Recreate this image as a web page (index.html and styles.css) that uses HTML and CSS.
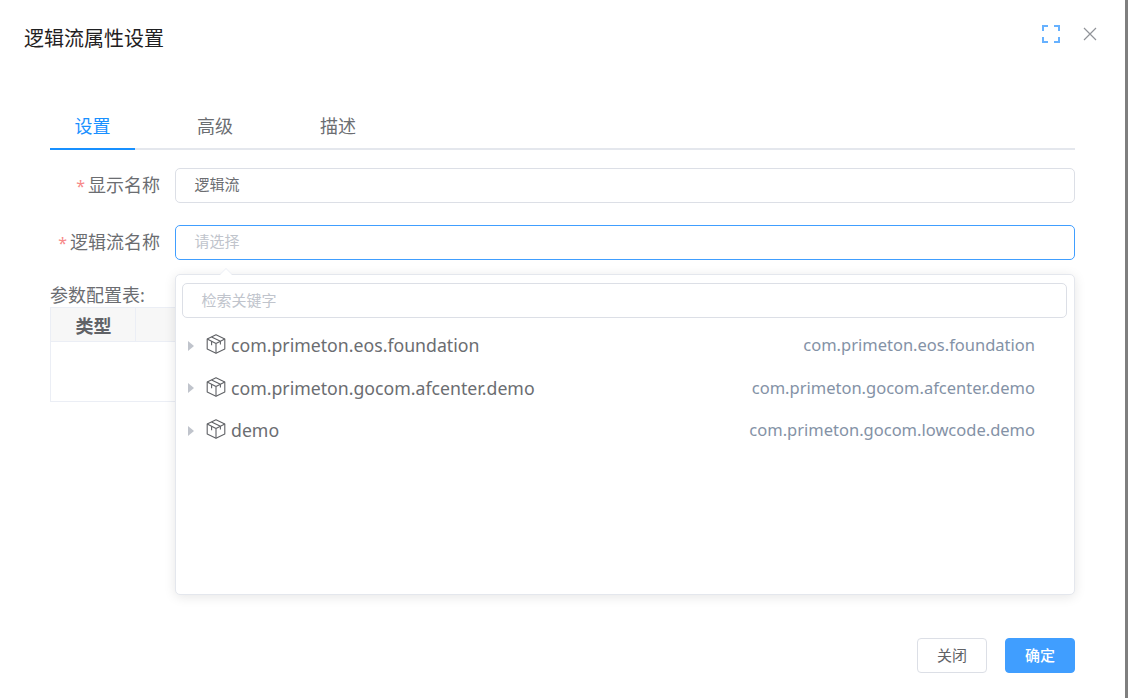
FILE: index.html
```html
<!DOCTYPE html>
<html lang="zh">
<head>
<meta charset="utf-8">
<title>逻辑流属性设置</title>
<link rel="stylesheet" href="styles.css">
</head>
<body>
<div class="dialog">
  <header class="head">
    <h1 class="title">逻辑流属性设置</h1>
    <div class="head-actions">
      <svg class="ico-full" width="18" height="18" viewBox="0 0 18 18" fill="none" stroke="#66b1ff" stroke-width="2"><path d="M1 6V1h5M12 1h5v5M17 12v5h-5M6 17H1v-5"/></svg>
      <svg class="ico-close" width="14" height="14" viewBox="0 0 14 14" fill="none" stroke="#909399" stroke-width="1.2"><path d="M1 1l12 12M13 1L1 13"/></svg>
    </div>
  </header>
  <main class="body">
    <nav class="tabs">
      <span class="tab active">设置</span>
      <span class="tab">高级</span>
      <span class="tab">描述</span>
    </nav>
    <div class="row">
      <label class="lbl"><i>*</i>显示名称</label>
      <div class="input">逻辑流</div>
    </div>
    <div class="row row2">
      <label class="lbl"><i>*</i>逻辑流名称</label>
      <div class="input focus">请选择</div>
    </div>
    <div class="param">参数配置表:</div>
    <div class="table">
      <div class="thead"><span class="th">类型</span></div>
      <div class="tbody"></div>
    </div>
  </main>
  <footer class="foot">
    <button class="btn">关闭</button>
    <button class="btn primary">确定</button>
  </footer>
  <div class="pop">
    <span class="arrow"></span>
    <div class="search">检索关键字</div>
    <ul class="tree">
      <li class="node"><span class="caret"></span>
        <svg class="pkg" width="20" height="20" viewBox="0 0 20 20" fill="none" stroke="#606266" stroke-width="1.1" stroke-linejoin="round"><path d="M10 .8l8.800 4.200v10L10 19.200 1.200 15V5z"/><path d="M1.200 5L10 9.400 18.800 5M10 9.400v9.800M5.600 2.900l8.800 4.300v3.300M5.600 7.200v4"/></svg>
        <span class="name">com.primeton.eos.foundation</span><span class="pk">com.primeton.eos.foundation</span></li>
      <li class="node"><span class="caret"></span>
        <svg class="pkg" width="20" height="20" viewBox="0 0 20 20" fill="none" stroke="#606266" stroke-width="1.1" stroke-linejoin="round"><path d="M10 .8l8.800 4.200v10L10 19.200 1.200 15V5z"/><path d="M1.200 5L10 9.400 18.800 5M10 9.400v9.800M5.600 2.900l8.800 4.300v3.300M5.600 7.200v4"/></svg>
        <span class="name">com.primeton.gocom.afcenter.demo</span><span class="pk">com.primeton.gocom.afcenter.demo</span></li>
      <li class="node"><span class="caret"></span>
        <svg class="pkg" width="20" height="20" viewBox="0 0 20 20" fill="none" stroke="#606266" stroke-width="1.1" stroke-linejoin="round"><path d="M10 .8l8.800 4.200v10L10 19.200 1.200 15V5z"/><path d="M1.200 5L10 9.400 18.800 5M10 9.400v9.800M5.600 2.900l8.800 4.300v3.300M5.600 7.200v4"/></svg>
        <span class="name">demo</span><span class="pk">com.primeton.gocom.lowcode.demo</span></li>
    </ul>
  </div>
</div>
</body>
</html>
```
FILE: styles.css
```css
* { box-sizing: border-box; }
html, body { margin: 0; height: 100%; overflow: hidden; }
body {
  background: #fff;
  font-family: "Noto Sans", "Noto Sans CJK SC", sans-serif;
  color: #606266;
  border-right: 3px solid #7f7f7f;
}
.dialog { position: relative; height: 698px; display: flex; flex-direction: column; }
.head { height: 76px; display: flex; justify-content: space-between; padding: 25px 28px 0 24px; }
.title { margin: 0; font-size: 20px; font-weight: 400; line-height: 28px; color: #1f2022; }
.head-actions { display: flex; gap: 23px; height: 20px; align-items: flex-start; }
.ico-full { margin-top: 0; }
.ico-close { margin-top: 2px; }
.body { flex: 1; padding: 26px 50px 0; }
.tabs { display: flex; border-bottom: 2px solid #e4e7ed; height: 48px; }
.tab { width: 122.500px; padding-left: 25px; font-size: 18px; line-height: 49px; height: 48px; color: #6b6d71; }
.tab:first-child { width: 85px; }
.tab:nth-child(2) { margin-left: 37px; padding-left: 25px; width: 122px; }
.tab:nth-child(3) { padding-left: 26px; }
.tab.active { color: #1890ff; border-bottom: 2px solid #1890ff; height: 48px; padding-left: 24.500px; }
.row { display: flex; margin-top: 18px; height: 35px; align-items: center; }
.row2 { margin-top: 22px; }
.lbl { width: 125px; padding-right: 15px; text-align: right; font-size: 18px; line-height: 33px; color: #6b6d71; white-space: nowrap; }
.lbl i { font-style: normal; font-size: 16px; color: #f78989; margin-right: 3px; }
.input { flex: 1; height: 35px; border: 1px solid #dcdfe6; border-radius: 5px; padding-left: 18.500px; font-size: 15px; line-height: 31px; color: #6b6d71; }
.input.focus { border-color: #409eff; color: #c0c4cc; }
.param { margin-top: 23px; font-size: 18px; line-height: 24px; color: #6b6d71; }
.table { border: 1px solid #ebeef5; height: 95px; }
.thead { height: 34px; background: #f7f7f7; border-bottom: 1px solid #ebeef5; display: flex; }
.th { width: 85px; border-right: 1px solid #ebeef5; padding: 1px 0 0 1px; text-align: center; font-size: 18px; font-weight: 700; line-height: 35px; color: #606266; }
.foot { height: 60px; flex: none; display: flex; justify-content: flex-end; gap: 18px; padding: 0 50px 25px 0; }
.btn { width: 70px; height: 35px; padding: 0; background: #fff; border: 1px solid #dcdfe6; border-radius: 4px; font: inherit; font-size: 15px; line-height: 31px; color: #606266; }
.btn.primary { background: #409eff; border-color: #409eff; color: #fff; font-weight: 500; }
.pop {
  position: absolute; left: 175px; top: 274px; width: 900px; height: 321px;
  background: #fff; border: 1px solid #e4e7ed; border-radius: 5px;
  box-shadow: 0 2px 12px rgba(0,0,0,.1); padding: 8px 7px 0 6px;
}
.arrow {
  position: absolute; left: 44px; top: -6px; width: 0; height: 0;
  border: 6px solid transparent; border-top: 0; border-bottom-color: #fff;
  filter: drop-shadow(0 -1px 0 #ebeef5);
}
.search { height: 35px; border: 1px solid #dcdfe6; border-radius: 5px; padding-left: 18.500px; font-size: 15px; line-height: 32px; color: #c0c4cc; }
.tree { list-style: none; margin: 6px 0 0; padding: 0; }
.node { display: flex; align-items: center; height: 42.500px; padding-left: 6px; }
.caret { width: 0; height: 0; border: 5px solid transparent; border-left: 6px solid #c0c4cc; border-right: 0; margin: 1px 12px 0 0; }
.pkg { flex: none; margin: -2px 5px 0 0; }
.name { flex: 1; font-size: 17.700px; color: #6b6d71; }
.pk { font-size: 16.500px; line-height: 40px; color: #8492a6; padding-right: 32px; }
```
